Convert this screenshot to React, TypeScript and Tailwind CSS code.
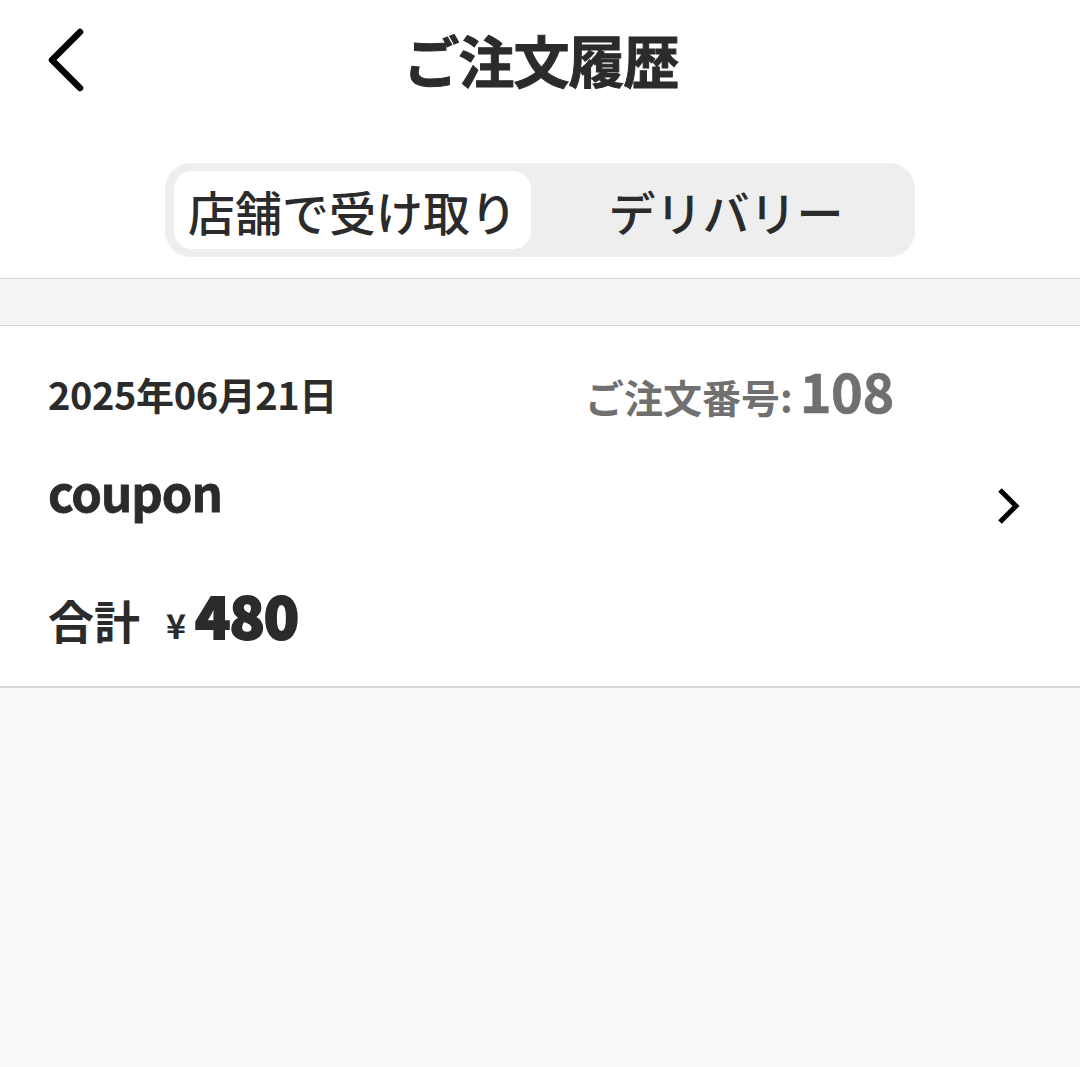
import React from "react";

const font = { fontFamily: '"Noto Sans CJK JP", "Noto Sans", sans-serif' };

export default function App() {
  return (
    <div className="w-[1080px] h-[1067px] bg-[#f9f9f9] flex flex-col text-[#2b2b2b]" style={font}>
      <div className="bg-white">
        <div className="relative h-[125px] flex items-center justify-center">
          <svg className="absolute left-[44px] top-[28px]" width="42" height="64" viewBox="0 0 42 64" fill="none">
            <path d="M36 4 L8 32 L36 60" stroke="#000" strokeWidth="6.5" strokeLinecap="round" strokeLinejoin="round" />
          </svg>
          <h1 className="text-[56px] font-bold leading-none tracking-[-1px] -mt-[8px] pl-[2px] [-webkit-text-stroke:1px_#2b2b2b]">ご注文履歴</h1>
        </div>
        <div className="flex justify-center pt-[38px] pb-[21px]">
          <div className="w-[750px] h-[94px] rounded-[26px] bg-[#eeeeee] p-[8px] pl-[9px] flex">
            <div className="w-[357px] h-[78px] rounded-[18px] bg-white flex items-center justify-center">
              <span className="text-[47px] font-medium leading-none">店舗で受け取り</span>
            </div>
            <div className="flex-1 flex items-center justify-center">
              <span className="text-[47px] font-medium leading-none pl-[14px]">デリバリー</span>
            </div>
          </div>
        </div>
      </div>
      <div className="h-[48px] border-y border-[#d6d6d6] bg-[#f5f5f5]" />
      <div className="bg-white border-b-2 border-[#d6d6d6] h-[362px] flex items-start pr-[58px]">
        <div className="flex-1 pl-[48px] pt-[37px] flex flex-col">
          <div className="flex items-baseline h-[60px]">
            <span className="w-[537px] text-[38px] font-bold leading-none tracking-[-0.4px] relative -top-[3px]">2025年06月21日</span>
            <span className="text-[39px] font-bold text-[#707070] leading-none">ご注文番号:</span>
            <span className="ml-[7px] text-[54px] font-bold text-[#707070] leading-none tracking-[-0.5px] [-webkit-text-stroke:0.6px_#707070]">108</span>
          </div>
          <div className="mt-[43px] text-[49px] font-bold leading-none tracking-[-1px] [-webkit-text-stroke:0.8px_#2b2b2b]">coupon</div>
          <div className="mt-[70px] flex items-baseline">
            <span className="text-[46px] font-bold leading-none">合計</span>
            <span className="ml-[26px] text-[34px] font-bold leading-none">¥</span>
            <span className="ml-[9px] text-[58px] font-black leading-none tracking-[-1px] [-webkit-text-stroke:2px_#2b2b2b]">480</span>
          </div>
        </div>
        <svg className="self-center" width="26" height="40" viewBox="0 0 26 40" fill="none">
          <path d="M4 4 L20 20 L4 36" stroke="#000" strokeWidth="5" strokeLinejoin="miter" />
        </svg>
      </div>
      <div className="flex-1" />
    </div>
  );
}
